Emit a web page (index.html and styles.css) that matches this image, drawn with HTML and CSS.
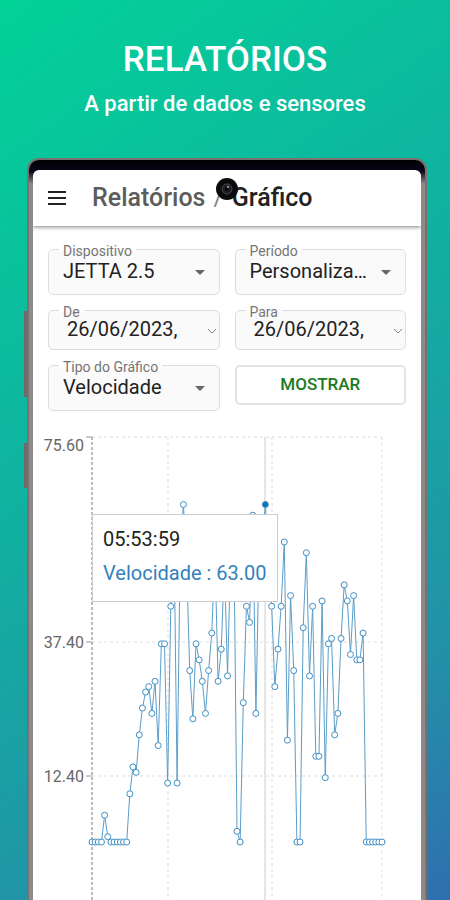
FILE: index.html
```html
<!DOCTYPE html>
<html lang="pt-BR">
<head>
    <meta charset="UTF-8">
    <meta name="viewport" content="width=device-width, initial-scale=1.0">
    <title>Relatórios - Gráfico</title>
    <link rel="stylesheet" href="styles.css">
</head>
<body>
    <header class="promo">
        <h1>RELATÓRIOS</h1>
        <p>A partir de dados e sensores</p>
    </header>

    <div class="phone">
        <span class="side-button volume"></span>
        <span class="side-button power"></span>
        <main class="screen">
            <div class="toolbar">
                <button class="menu-btn" type="button" aria-label="Menu">
                    <svg width="18" height="14" viewBox="0 0 18 14">
                        <path d="M0 1h18M0 7h18M0 13h18" stroke="#222" stroke-width="2"/>
                    </svg>
                </button>
                <h2 class="breadcrumb"><a href="#">Relatórios</a><span class="slash">/</span><span>Gráfico</span></h2>
                <svg class="camera" width="22" height="22" viewBox="0 0 22 22">
                    <circle cx="11" cy="11" r="11" fill="#0b0b0d"/>
                    <circle cx="11" cy="11" r="5" fill="#1d1e22" stroke="#45474c"/>
                    <circle cx="11" cy="11" r="2" fill="#07070a"/>
                    <circle cx="12" cy="9" r="1" fill="#b5b8bd"/>
                </svg>
            </div>

            <form class="filters">
                <div class="field">
                    <label for="device">Dispositivo</label>
                    <select id="device"><option>JETTA 2.5</option></select>
                    <svg class="arrow" width="10" height="5" viewBox="0 0 10 5"><path d="M0 0h10L5 5z" fill="#666"/></svg>
                </div>
                <div class="field">
                    <label for="period">Período</label>
                    <select id="period"><option>Personalizado</option></select>
                    <svg class="arrow" width="10" height="5" viewBox="0 0 10 5"><path d="M0 0h10L5 5z" fill="#666"/></svg>
                </div>
                <div class="field date">
                    <label for="from">De</label>
                    <input id="from" type="text" value="26/06/2023,">
                    <svg class="arrow" width="10" height="6" viewBox="0 0 10 6"><path d="M1 1l4 4 4-4" fill="none" stroke="#888"/></svg>
                </div>
                <div class="field date">
                    <label for="to">Para</label>
                    <input id="to" type="text" value="26/06/2023,">
                    <svg class="arrow" width="10" height="6" viewBox="0 0 10 6"><path d="M1 1l4 4 4-4" fill="none" stroke="#888"/></svg>
                </div>
                <div class="field">
                    <label for="type">Tipo do Gráfico</label>
                    <select id="type"><option>Velocidade</option></select>
                    <svg class="arrow" width="10" height="5" viewBox="0 0 10 5"><path d="M0 0h10L5 5z" fill="#666"/></svg>
                </div>
                <button class="show-btn" type="button">MOSTRAR</button>
            </form>

            <div class="chart">
                <svg id="plot" viewBox="0 0 388 480">
                    <g class="grid">
                        <path d="M59 11H349M59 216H349M59 350H349M135 11V480M239 11V480M349 11V480"/>
                    </g>
                    <path class="axis" d="M59 11V480"/>
                    <path class="tick" d="M53 11h6M53 216h6M53 350h6"/>
                    <path class="cursor" d="M232 11V480"/>
                    <g class="labels">
                        <text x="51" y="25">75.60</text>
                        <text x="51" y="222">37.40</text>
                        <text x="51" y="356">12.40</text>
                    </g>
                    <polyline id="line" class="line"/>
                    <g id="dots" class="dots"></g>
                </svg>
                <div class="tooltip">
                    <p>05:53:59</p>
                    <p class="value">Velocidade : 63.00</p>
                </div>
            </div>
        </main>
    </div>

    <script>
        const speeds = [
            0, 0, 0, 0, 5, 1, 0, 0, 0, 0, 0, 0, 9, 14, 13, 20, 25, 28, 29, 24,
            30, 18, 37, 37, 11, 44, 58, 11, 55, 63, 52, 32, 23, 37, 34, 30, 24, 32, 39, 54,
            30, 36, 52, 31, 54, 57, 2, 0, 26, 44, 41, 61, 24, 54, 56, 63, 52, 44, 29, 36,
            44, 56, 19, 46, 32, 0, 0, 40, 54, 31, 44, 16, 16, 45, 12, 37, 38, 20, 24, 38,
            48, 45, 35, 46, 34, 34, 39, 0, 0, 0, 0, 0, 0
        ];
        const active = 55;
        const left = 59, width = 290, bottom = 416, height = 405, max = 75.6;

        const points = speeds.map((speed, i) => [
            left + i * width / (speeds.length - 1),
            bottom - speed * height / max
        ]);

        document.getElementById('line').setAttribute('points', points.join(' '));

        const dots = document.getElementById('dots');
        points.forEach(([x, y], i) => {
            const dot = document.createElementNS('http://www.w3.org/2000/svg', 'circle');
            dot.setAttribute('cx', x);
            dot.setAttribute('cy', y);
            dot.setAttribute('r', 3);
            if (i === active) {
                dot.setAttribute('class', 'active');
            }
            dots.appendChild(dot);
        });
    </script>
</body>
</html>
```

FILE: styles.css
```css
* {
    box-sizing: border-box;
}

body {
    font-family: Roboto, sans-serif;
    margin: 0;
    height: 100vh;
    overflow: hidden;
    display: flex;
    flex-direction: column;
    background: linear-gradient(145deg, #02d298 0%, #10b2a0 42%, #2292a7 78%, #2f6fb0 100%);
    color: #222;
}

h1, h2, p {
    margin: 0;
    font-weight: 400;
}

.promo {
    height: 158px;
    padding-top: 38px;
    flex: none;
    text-align: center;
    color: #fff;
}

.promo h1 {
    font-size: 35px;
    font-weight: 500;
    line-height: 44px;
}

.promo p {
    margin-top: 8px;
    font-size: 22px;
    font-weight: 500;
    line-height: 28px;
}

.phone {
    position: relative;
    flex: 1;
    min-height: 0;
    margin: 0 23px 0 27px;
    padding: 10px 4px 0;
    border: 2px solid #77716f;
    border-bottom: 0;
    border-radius: 12px 12px 0 0;
    background: linear-gradient(#000 0, #08051c 11px, #8f8a89 24px);
}

.side-button {
    position: absolute;
    left: -5px;
    width: 3px;
    background: #6c6a6b;
}

.volume {
    top: 151px;
    height: 86px;
}

.power {
    top: 283px;
    height: 45px;
}

.screen {
    height: 100%;
    display: flex;
    flex-direction: column;
    overflow: hidden;
    border-radius: 6px 6px 0 0;
    background: #fff;
}

.toolbar {
    position: relative;
    flex: none;
    height: 56px;
    padding: 0 15px;
    display: flex;
    align-items: center;
    gap: 26px;
    box-shadow: 0 1px 4px rgba(0, 0, 0, 0.5);
}

.menu-btn {
    display: flex;
    padding: 0;
    border: none;
    background: none;
}

.breadcrumb {
    display: flex;
    gap: 8px;
    font-size: 25px;
    font-weight: 500;
    line-height: 32px;
}

.breadcrumb a {
    color: #5c5c5c;
    text-decoration: none;
}

.slash {
    color: #888;
    font-weight: 400;
}

.camera {
    position: absolute;
    top: 8px;
    left: 50%;
    margin-left: -11px;
}

.filters {
    display: grid;
    grid-template-columns: 1fr 1fr;
    gap: 15px;
    padding: 23px 15px 0;
}

.field {
    position: relative;
    height: 46px;
    border: 1px solid #ddd;
    border-radius: 5px;
    background: #fafafa;
}

.date {
    height: 40px;
}

.field label {
    position: absolute;
    top: -7px;
    left: 10px;
    padding: 0 4px;
    background: linear-gradient(#fff 50%, #fafafa 50%);
    font-size: 14px;
    line-height: 16px;
    color: #757575;
}

.field select,
.field input {
    display: block;
    width: 100%;
    height: 100%;
    padding: 0 36px 2px 14px;
    border: none;
    appearance: none;
    background: none;
    font-family: inherit;
    font-size: 20px;
    color: #222;
    text-overflow: ellipsis;
    overflow: hidden;
    white-space: nowrap;
}

.field input {
    padding: 0 18px 2px;
}

.arrow {
    position: absolute;
    top: 20px;
    right: 14px;
    pointer-events: none;
}

.date .arrow {
    top: 17px;
    right: 2px;
}

.show-btn {
    height: 40px;
    padding: 0 0 2px;
    border: 2px solid #e2e5e2;
    border-radius: 5px;
    background: #fff;
    font-family: inherit;
    font-size: 17px;
    font-weight: 500;
    color: #1b7a22;
}

.chart {
    position: relative;
    flex: 1;
    margin-top: 15px;
}

.chart svg {
    display: block;
    width: 100%;
}

.grid path {
    fill: none;
    stroke: #ddd;
    stroke-dasharray: 3 3;
}

.axis {
    stroke: #bbb;
    stroke-width: 2;
    stroke-dasharray: 3 2;
}

.tick {
    stroke: #999;
}

.cursor {
    stroke: #ccc;
}

.labels text {
    font-size: 16px;
    text-anchor: end;
    fill: #666;
}

.line {
    fill: none;
    stroke: #5b9dc9;
}

.dots circle {
    fill: #fff;
    stroke: #3f8fc4;
}

.dots .active {
    fill: #0d75b8;
}

.tooltip {
    position: absolute;
    top: 88px;
    left: 59px;
    padding: 7px 10px 11px;
    border: 1px solid #ccc;
    background: #fff;
    font-size: 20px;
    line-height: 24px;
    white-space: nowrap;
}

.tooltip p {
    padding: 5px 0;
}

.tooltip .value {
    color: #3182bd;
}
```
